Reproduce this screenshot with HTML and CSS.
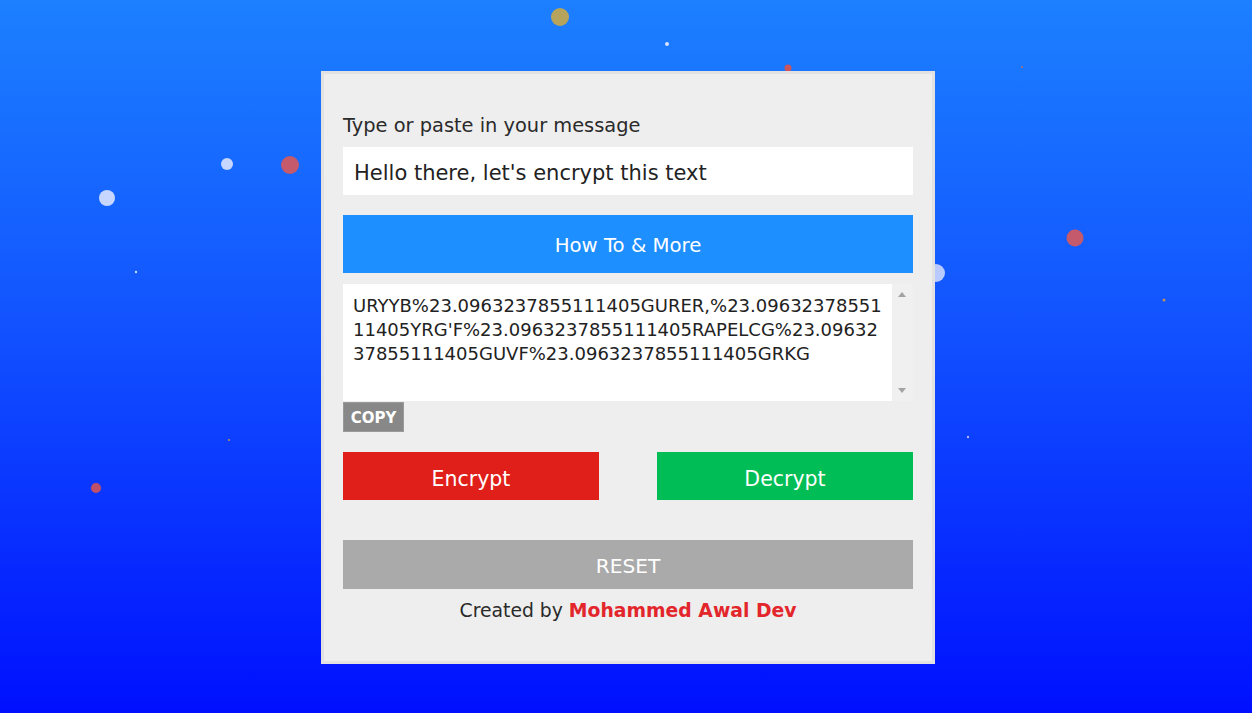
FILE: index.html
```html
<!DOCTYPE html>
<html>
<head>
<meta charset="utf-8">
<link rel="stylesheet" href="styles.css">
</head>
<body>
<svg class="particles" width="1252" height="713" viewBox="0 0 1252 713">
  <circle cx="560" cy="17" r="9" fill="#c9a94a" opacity="0.9"/>
  <circle cx="667" cy="44" r="2" fill="#d6e2ff"/>
  <circle cx="788" cy="68" r="3.5" fill="#c9555f"/>
  <circle cx="1022" cy="67" r="1" fill="#b07070"/>
  <circle cx="227" cy="164" r="6" fill="#c6d6ff"/>
  <circle cx="290" cy="165" r="9" fill="#c45a6c"/>
  <circle cx="107" cy="198" r="8" fill="#c6d6ff"/>
  <circle cx="136" cy="272" r="1.2" fill="#c6d6ff"/>
  <circle cx="1075" cy="238" r="8.5" fill="#c45a6c"/>
  <circle cx="936" cy="273" r="9" fill="#b8caff"/>
  <circle cx="1164" cy="300" r="1.5" fill="#c0905a"/>
  <circle cx="229" cy="440" r="1" fill="#c0905a"/>
  <circle cx="968" cy="437" r="1.2" fill="#b0b0ff"/>
  <circle cx="96" cy="488" r="5" fill="#c0506a"/>
</svg>
<main class="card">
  <label class="label">Type or paste in your message</label>
  <div class="input">Hello there, let's encrypt this text</div>
  <button class="btn btn-how">How To &amp; More</button>
  <div class="output">
    <div class="output-text">URYYB%23.0963237855111405GURER,%23.09632378551<br>11405YRG'F%23.0963237855111405RAPELCG%23.09632<br>37855111405GUVF%23.0963237855111405GRKG</div>
    <div class="scrollbar">
      <span class="arrow up"></span>
      <span class="arrow down"></span>
    </div>
  </div>
  <button class="copy">COPY</button>
  <div class="actions">
    <button class="btn btn-encrypt">Encrypt</button>
    <button class="btn btn-decrypt">Decrypt</button>
  </div>
  <button class="btn btn-reset">RESET</button>
  <p class="credit">Created by <span class="author">Mohammed Awal Dev</span></p>
</main>
</body>
</html>
```

FILE: styles.css
```css
* { box-sizing: border-box; }
html, body { margin: 0; padding: 0; }
body {
  width: 1252px;
  height: 713px;
  overflow: hidden;
  background: linear-gradient(180deg, #1c80ff 0%, #1253ff 45%, #0010ff 100%);
  font-family: "DejaVu Sans", "Open Sans", sans-serif;
  color: #222;
  position: relative;
  display: flex;
  justify-content: center;
  align-items: flex-start;
}
.particles {
  position: absolute;
  left: 0;
  top: 0;
}
.card {
  position: relative;
  margin-top: 71px;
  margin-left: 4px;
  width: 614px;
  height: 593px;
  background: #eeeeee;
  border: 3px solid #e2e2e2;
  padding: 41px 19px 0 19px;
  display: flex;
  flex-direction: column;
}
.label {
  font-size: 19.4px;
  line-height: 22px;
  color: #2a2a2a;
  margin-bottom: 10px;
}
.input {
  height: 48px;
  background: #fff;
  font-size: 21px;
  line-height: 44px;
  padding: 4px 0 0 11px;
  color: #222;
}
.btn {
  border: none;
  color: #fff;
  font-family: inherit;
  display: flex;
  align-items: center;
  justify-content: center;
  padding: 0;
}
.btn-how {
  margin-top: 20px;
  height: 58px;
  width: 100%;
  background: #1e8fff;
  font-size: 19.7px;
  padding-top: 2px;
}
.output {
  margin-top: 11px;
  height: 117px;
  display: flex;
}
.output-text {
  flex: 1;
  background: #fff;
  padding: 10px 0 0 10px;
  font-size: 18px;
  line-height: 24px;
  color: #222;
  white-space: nowrap;
  overflow: hidden;
}
.scrollbar {
  width: 21px;
  background: #f0f0f0;
  position: relative;
}
.arrow {
  position: absolute;
  left: 6px;
  width: 0;
  height: 0;
  border-left: 4px solid transparent;
  border-right: 4px solid transparent;
}
.arrow.up { top: 8px; border-bottom: 5px solid #a3a3a3; }
.arrow.down { bottom: 8px; border-top: 5px solid #a3a3a3; }
.copy {
  margin-top: 1px;
  align-self: flex-start;
  width: 61px;
  height: 30px;
  background: #888888;
  border: 1px solid #9a9a9a;
  color: #fff;
  font-family: inherit;
  font-weight: 700;
  font-size: 15px;
  padding: 1px 0 0 0;
}
.actions {
  margin-top: 20px;
  display: flex;
  justify-content: space-between;
}
.btn-encrypt, .btn-decrypt {
  width: 256px;
  height: 48px;
  font-size: 20.5px;
  padding-top: 5px;
}
.btn-encrypt { background: #e11f1a; }
.btn-decrypt { background: #00bd55; }
.btn-reset {
  margin-top: 40px;
  height: 49px;
  width: 100%;
  background: #aaaaaa;
  font-size: 20.2px;
  padding-top: 2px;
}
.credit {
  margin: 11px 0 0 0;
  text-align: center;
  font-size: 18.8px;
  line-height: 22px;
  color: #2a2a2a;
}
.author {
  color: #e3262b;
  font-weight: 700;
}
```
